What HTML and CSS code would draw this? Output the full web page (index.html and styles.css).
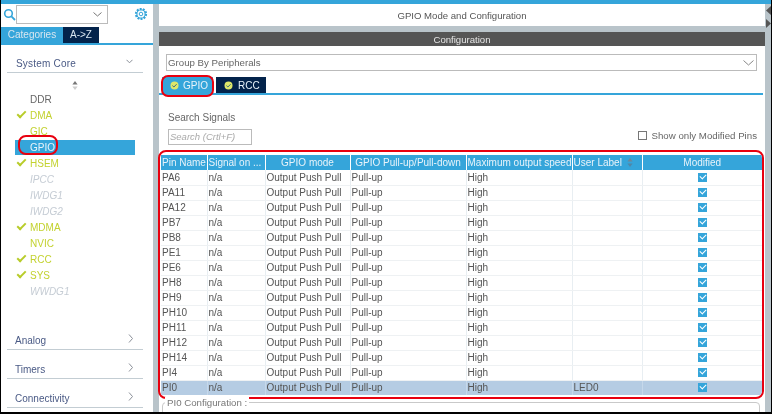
FILE: index.html
```html
<!DOCTYPE html>
<html lang="en">
<head>
<meta charset="utf-8">
<title>GPIO Mode and Configuration</title>
<link rel="stylesheet" href="styles.css">
</head>
<body>
<div class="app">
  <aside class="side">
    <div class="searchrow">
      <svg class="mag" width="13" height="13" viewBox="0 0 13 13"><circle cx="5.5" cy="5.5" r="3.8" fill="none" stroke="#35a5da" stroke-width="1.6"/><path d="M8.4 8.4l3.6 3.6" stroke="#35a5da" stroke-width="1.8"/></svg>
      <div class="combo"><svg width="9" height="5" viewBox="0 0 9 5"><path d="M.5.5l4 3.5 4-3.5" fill="none" stroke="#777" stroke-width="1"/></svg></div>
      <svg class="gear" width="14" height="14" viewBox="0 0 14 14"><circle cx="7" cy="7" r="5" fill="none" stroke="#35a5da" stroke-width="2.2" stroke-dasharray="1.9 1.2"/><circle cx="7" cy="7" r="4.1" fill="none" stroke="#35a5da" stroke-width="1"/><circle cx="7" cy="7" r="1.8" fill="none" stroke="#35a5da" stroke-width="1"/></svg>
    </div>
    <div class="sidetabs"><span class="stab on">Categories</span><span class="stab">A-&gt;Z</span></div>
    <div class="cat first"><span>System Core</span><svg width="7" height="5" viewBox="0 0 7 5"><path d="M.5 .8l3 3 3-3" fill="none" stroke="#8a8f98"/></svg></div>
    <div class="sort"><svg width="6" height="9" viewBox="0 0 6 9"><path d="M3 0l2.6 3.4H.4z" fill="#777"/><path d="M3 9L.4 5.6h5.2z" fill="#ccc"/></svg></div>
    <ul class="items">
      <li class="it plain">DDR</li>
      <li class="it ok chk">DMA</li>
      <li class="it ok">GIC</li>
      <li class="it sel">GPIO<i class="ring-side"></i></li>
      <li class="it ok chk">HSEM</li>
      <li class="it off">IPCC</li>
      <li class="it off">IWDG1</li>
      <li class="it off">IWDG2</li>
      <li class="it ok chk">MDMA</li>
      <li class="it ok">NVIC</li>
      <li class="it ok chk">RCC</li>
      <li class="it ok chk">SYS</li>
      <li class="it off">WWDG1</li>
    </ul>
    <div class="cat"><span>Analog</span><svg width="6" height="9" viewBox="0 0 6 9"><path d="M1 .5l3.500 4-3.500 4" fill="none" stroke="#8a8f98"/></svg></div>
    <div class="cat"><span>Timers</span><svg width="6" height="9" viewBox="0 0 6 9"><path d="M1 .5l3.500 4-3.500 4" fill="none" stroke="#8a8f98"/></svg></div>
    <div class="cat"><span>Connectivity</span><svg width="6" height="9" viewBox="0 0 6 9"><path d="M1 .5l3.500 4-3.500 4" fill="none" stroke="#8a8f98"/></svg></div>
  </aside>
  <main class="main">
    <div class="title">GPIO Mode and Configuration</div>
    <div class="panel">
      <div class="bar">Configuration</div>
      <div class="group"><span>Group By Peripherals</span><svg width="11" height="6" viewBox="0 0 11 6"><path d="M.5.5l5 4.500 5-4.500" fill="none" stroke="#888"/></svg></div>
      <div class="tabs">
        <span class="tab t1"><svg width="9" height="9" viewBox="0 0 9 9"><circle cx="4.500" cy="4.500" r="4" fill="#dfe86a"/><path d="M2.400 4.600l1.500 1.400 2.700-2.800" fill="none" stroke="#3b6a7a"/></svg>GPIO</span>
        <span class="tab t2"><svg width="9" height="9" viewBox="0 0 9 9"><circle cx="4.500" cy="4.500" r="4" fill="#dfe86a"/><path d="M2.400 4.600l1.500 1.400 2.700-2.800" fill="none" stroke="#3b6a7a"/></svg>RCC</span>
      </div>
      <div class="search">
        <div class="searchleft">
          <div class="slabel">Search Signals</div>
          <div class="sinput">Search (Crtl+F)</div>
        </div>
        <label class="only"><i class="box"></i>Show only Modified Pins</label>
      </div>
      <div class="tablewrap">
        <table class="grid">
          <colgroup><col class="c1"><col class="c2"><col class="c3"><col class="c4"><col class="c5"><col class="c6"><col class="c7"></colgroup>
          <thead>
            <tr><th class="left">Pin Name</th><th class="left">Signal on ...</th><th>GPIO mode</th><th>GPIO Pull-up/Pull-down</th><th class="left">Maximum output speed</th><th class="left">User Label<svg class="hs" width="6" height="9" viewBox="0 0 6 9"><path d="M3 0l2.600 3.400H.4z" fill="#6d8799"/><path d="M3 9L.4 5.600h5.200z" fill="#4f87a8"/></svg></th><th>Modified</th></tr>
          </thead>
          <tbody>
            <tr><td>PA6</td><td>n/a</td><td>Output Push Pull</td><td>Pull-up</td><td>High</td><td></td><td class="m"><i class="cb"></i></td></tr>
            <tr><td>PA11</td><td>n/a</td><td>Output Push Pull</td><td>Pull-up</td><td>High</td><td></td><td class="m"><i class="cb"></i></td></tr>
            <tr><td>PA12</td><td>n/a</td><td>Output Push Pull</td><td>Pull-up</td><td>High</td><td></td><td class="m"><i class="cb"></i></td></tr>
            <tr><td>PB7</td><td>n/a</td><td>Output Push Pull</td><td>Pull-up</td><td>High</td><td></td><td class="m"><i class="cb"></i></td></tr>
            <tr><td>PB8</td><td>n/a</td><td>Output Push Pull</td><td>Pull-up</td><td>High</td><td></td><td class="m"><i class="cb"></i></td></tr>
            <tr><td>PE1</td><td>n/a</td><td>Output Push Pull</td><td>Pull-up</td><td>High</td><td></td><td class="m"><i class="cb"></i></td></tr>
            <tr><td>PE6</td><td>n/a</td><td>Output Push Pull</td><td>Pull-up</td><td>High</td><td></td><td class="m"><i class="cb"></i></td></tr>
            <tr><td>PH8</td><td>n/a</td><td>Output Push Pull</td><td>Pull-up</td><td>High</td><td></td><td class="m"><i class="cb"></i></td></tr>
            <tr><td>PH9</td><td>n/a</td><td>Output Push Pull</td><td>Pull-up</td><td>High</td><td></td><td class="m"><i class="cb"></i></td></tr>
            <tr><td>PH10</td><td>n/a</td><td>Output Push Pull</td><td>Pull-up</td><td>High</td><td></td><td class="m"><i class="cb"></i></td></tr>
            <tr><td>PH11</td><td>n/a</td><td>Output Push Pull</td><td>Pull-up</td><td>High</td><td></td><td class="m"><i class="cb"></i></td></tr>
            <tr><td>PH12</td><td>n/a</td><td>Output Push Pull</td><td>Pull-up</td><td>High</td><td></td><td class="m"><i class="cb"></i></td></tr>
            <tr><td>PH14</td><td>n/a</td><td>Output Push Pull</td><td>Pull-up</td><td>High</td><td></td><td class="m"><i class="cb"></i></td></tr>
            <tr><td>PI4</td><td>n/a</td><td>Output Push Pull</td><td>Pull-up</td><td>High</td><td></td><td class="m"><i class="cb"></i></td></tr>
            <tr class="cur"><td>PI0</td><td>n/a</td><td>Output Push Pull</td><td>Pull-up</td><td>High</td><td>LED0</td><td class="m"><i class="cb"></i></td></tr>
          </tbody>
        </table>
      </div>
      <div class="pinconf"><span>PI0 Configuration :</span></div>
    </div>
  </main>
  <div class="rail"><svg width="7" height="24" viewBox="0 0 7 24"><path d="M6 1v9L1 5.500z" fill="#555"/><path d="M1 14v9l5-4.500z" fill="#555"/></svg></div>
</div>
</body>
</html>
```
FILE: styles.css
```css
*, *::before, *::after { box-sizing: border-box; }
html, body { margin: 0; padding: 0; }
body { width: 772px; height: 414px; overflow: hidden; background: #000; font-family: "Liberation Sans", Arial, sans-serif; font-size: 10px; color: #555; }
.app { width: 770px; height: 412px; margin-left: 1px; display: flex; background: #b9c4ca; border-top: 4px solid #35a5da; overflow: hidden; filter: blur(.3px); }
.side { width: 152px; flex: none; background: #fff; }
.searchrow { height: 21px; padding: 1px 5px 0 2px; display: flex; align-items: flex-start; }
.mag { margin-top: 3px; flex: none; }
.combo { width: 93px; height: 19px; border: 1px solid #bbb; background: #fff; display: flex; align-items: center; justify-content: flex-end; padding-right: 5px; }
.gear { margin: 2px 0 0 26px; flex: none; }
.sidetabs { display: flex; height: 18px; margin-top: 2px; border-bottom: 2px solid #35a5da; }
.stab { height: 16px; line-height: 16px; background: #03234b; color: #d8e6f0; text-align: center; font-size: 10px; }
.stab.on { width: 62px; background: #35a5da; }
.stab + .stab { width: 36px; }
.cat { margin: 0 10px 0 6px; height: 29px; border-bottom: 1px solid #c3cdd3; display: flex; align-items: flex-end; justify-content: space-between; padding: 0 9px 3px 8px; font-size: 10px; color: #4a5a85; }
.cat svg { margin-bottom: 3px; }
.cat.first { height: 28px; padding-left: 9px; padding-right: 10px; letter-spacing: .2px; }
.cat.first svg { margin-bottom: 5px; }
.sort { height: 19px; padding: 8px 0 0 71px; }
.sort svg { display: block; }
.items { list-style: none; margin: 0 0 0 14px; padding: 0; height: 229px; width: 120px; }
.it { height: 16px; line-height: 15px; padding-left: 15px; position: relative; font-size: 10px; }
.plain { color: #666; }
.ok { color: #c3d230; }
.off { color: #c5ccd4; font-style: italic; }
.sel { background: #35a5da; color: #e8f3fa; height: 15px; margin-bottom: 1px; }
.chk::before { content: ""; position: absolute; left: 2px; top: 3px; width: 9px; height: 5px; border-left: 2px solid #b8cc2a; border-bottom: 2px solid #b8cc2a; transform: rotate(-45deg); }
.ring-side { position: absolute; left: 3px; top: -5px; width: 40px; height: 20px; border: 2px solid #e8000f; border-radius: 8px; }
.main { width: 606px; flex: none; margin-left: 6px; display: flex; flex-direction: column; }
.title { height: 22px; background: #fff; text-align: center; line-height: 23px; font-size: 9.6px; color: #555; }
.panel { margin-top: 6px; height: 380px; background: #fff; position: relative; }
.bar { height: 14px; background: #555; color: #e6e6e6; text-align: center; line-height: 15px; font-size: 9.6px; }
.group { margin: 8px 8px 0 7px; height: 17px; border: 1px solid #bbb; display: flex; align-items: center; justify-content: space-between; padding: 0 2px 0 1px; font-size: 9.7px; color: #666; }
.tabs { margin-top: 6px; height: 18px; border-bottom: 2px solid #35a5da; margin-right: 2px; padding-left: 3px; display: flex; gap: 3px; position: relative; }
.tab { height: 16px; display: flex; align-items: center; gap: 4px; color: #e8f3fa; font-size: 10px; padding-left: 8px; }
.t1 { width: 51px; background: #35a5da; }
.t1::after { content: ""; position: absolute; left: 2px; top: -2px; width: 53px; height: 22px; border: 2px solid #e8000f; border-radius: 7px; }
.t2 { width: 50px; background: #03234b; gap: 5px; }
.search { height: 55px; padding: 17px 8px 0 9px; display: flex; justify-content: space-between; }
.slabel { font-size: 10px; color: #666; line-height: 12px; }
.sinput { width: 84px; height: 16px; margin-top: 5px; border: 1px solid #bbb; font-style: italic; color: #aaa; font-size: 9.500px; line-height: 14px; padding-left: 1px; }
.only { margin-top: 18px; display: flex; align-items: flex-start; gap: 4px; color: #666; font-size: 9.7px; height: 12px; line-height: 12px; }
.box { width: 9px; height: 9px; border: 1px solid #777; margin-top: 1px; }
.tablewrap { margin: 0 0 0 -1px; width: 606px; height: 249px; border: 2px solid #e8000f; border-radius: 8px; padding: 3px 1px 0 1px; overflow: hidden; }
.grid { border-collapse: collapse; table-layout: fixed; width: 601px; }
.c1 { width: 46px; } .c2 { width: 58px; } .c3 { width: 85px; } .c4 { width: 116px; } .c5 { width: 106px; } .c6 { width: 70px; } .c7 { width: 120px; }
th { height: 15px; padding: 0 1px; background: #35a5da; color: #e8f3fa; font-weight: normal; font-size: 10px; text-align: center; border-left: 1px solid #fff; white-space: nowrap; overflow: hidden; }
th.left { text-align: left; }
.hs { margin-left: 5px; vertical-align: -1px; }
td { height: 15px; padding: 0 0 0 1px; border-left: 1px solid #e8eef2; border-bottom: 1px solid #eef1f3; font-size: 10px; color: #555; white-space: nowrap; overflow: hidden; line-height: 13px; }
th:first-child, td:first-child { border-left: 0; }
.cur td { background: #b5cce3; border-left-color: #c6d8ea; border-bottom: 0; }
.m { text-align: center; }
.cb { display: inline-block; width: 9px; height: 9px; background: #35a5da; position: relative; vertical-align: -1px; }
.cb::after { content: ""; position: absolute; left: 2px; top: 1px; width: 6px; height: 4px; border-left: 1px solid #fff; border-bottom: 1px solid #fff; transform: rotate(-45deg); }
.pinconf { margin: 3px 5px 0 3px; height: 20px; border: 1px solid #c9c9c9; border-radius: 4px; padding-left: 2px; }
.pinconf span { display: inline-block; background: #fff; padding: 0 2px; font-size: 9.7px; color: #777; line-height: 11px; position: relative; top: -6px; }
.rail { flex: 1; }
.rail svg { display: block; margin: 1px 0 0 0; }
```
